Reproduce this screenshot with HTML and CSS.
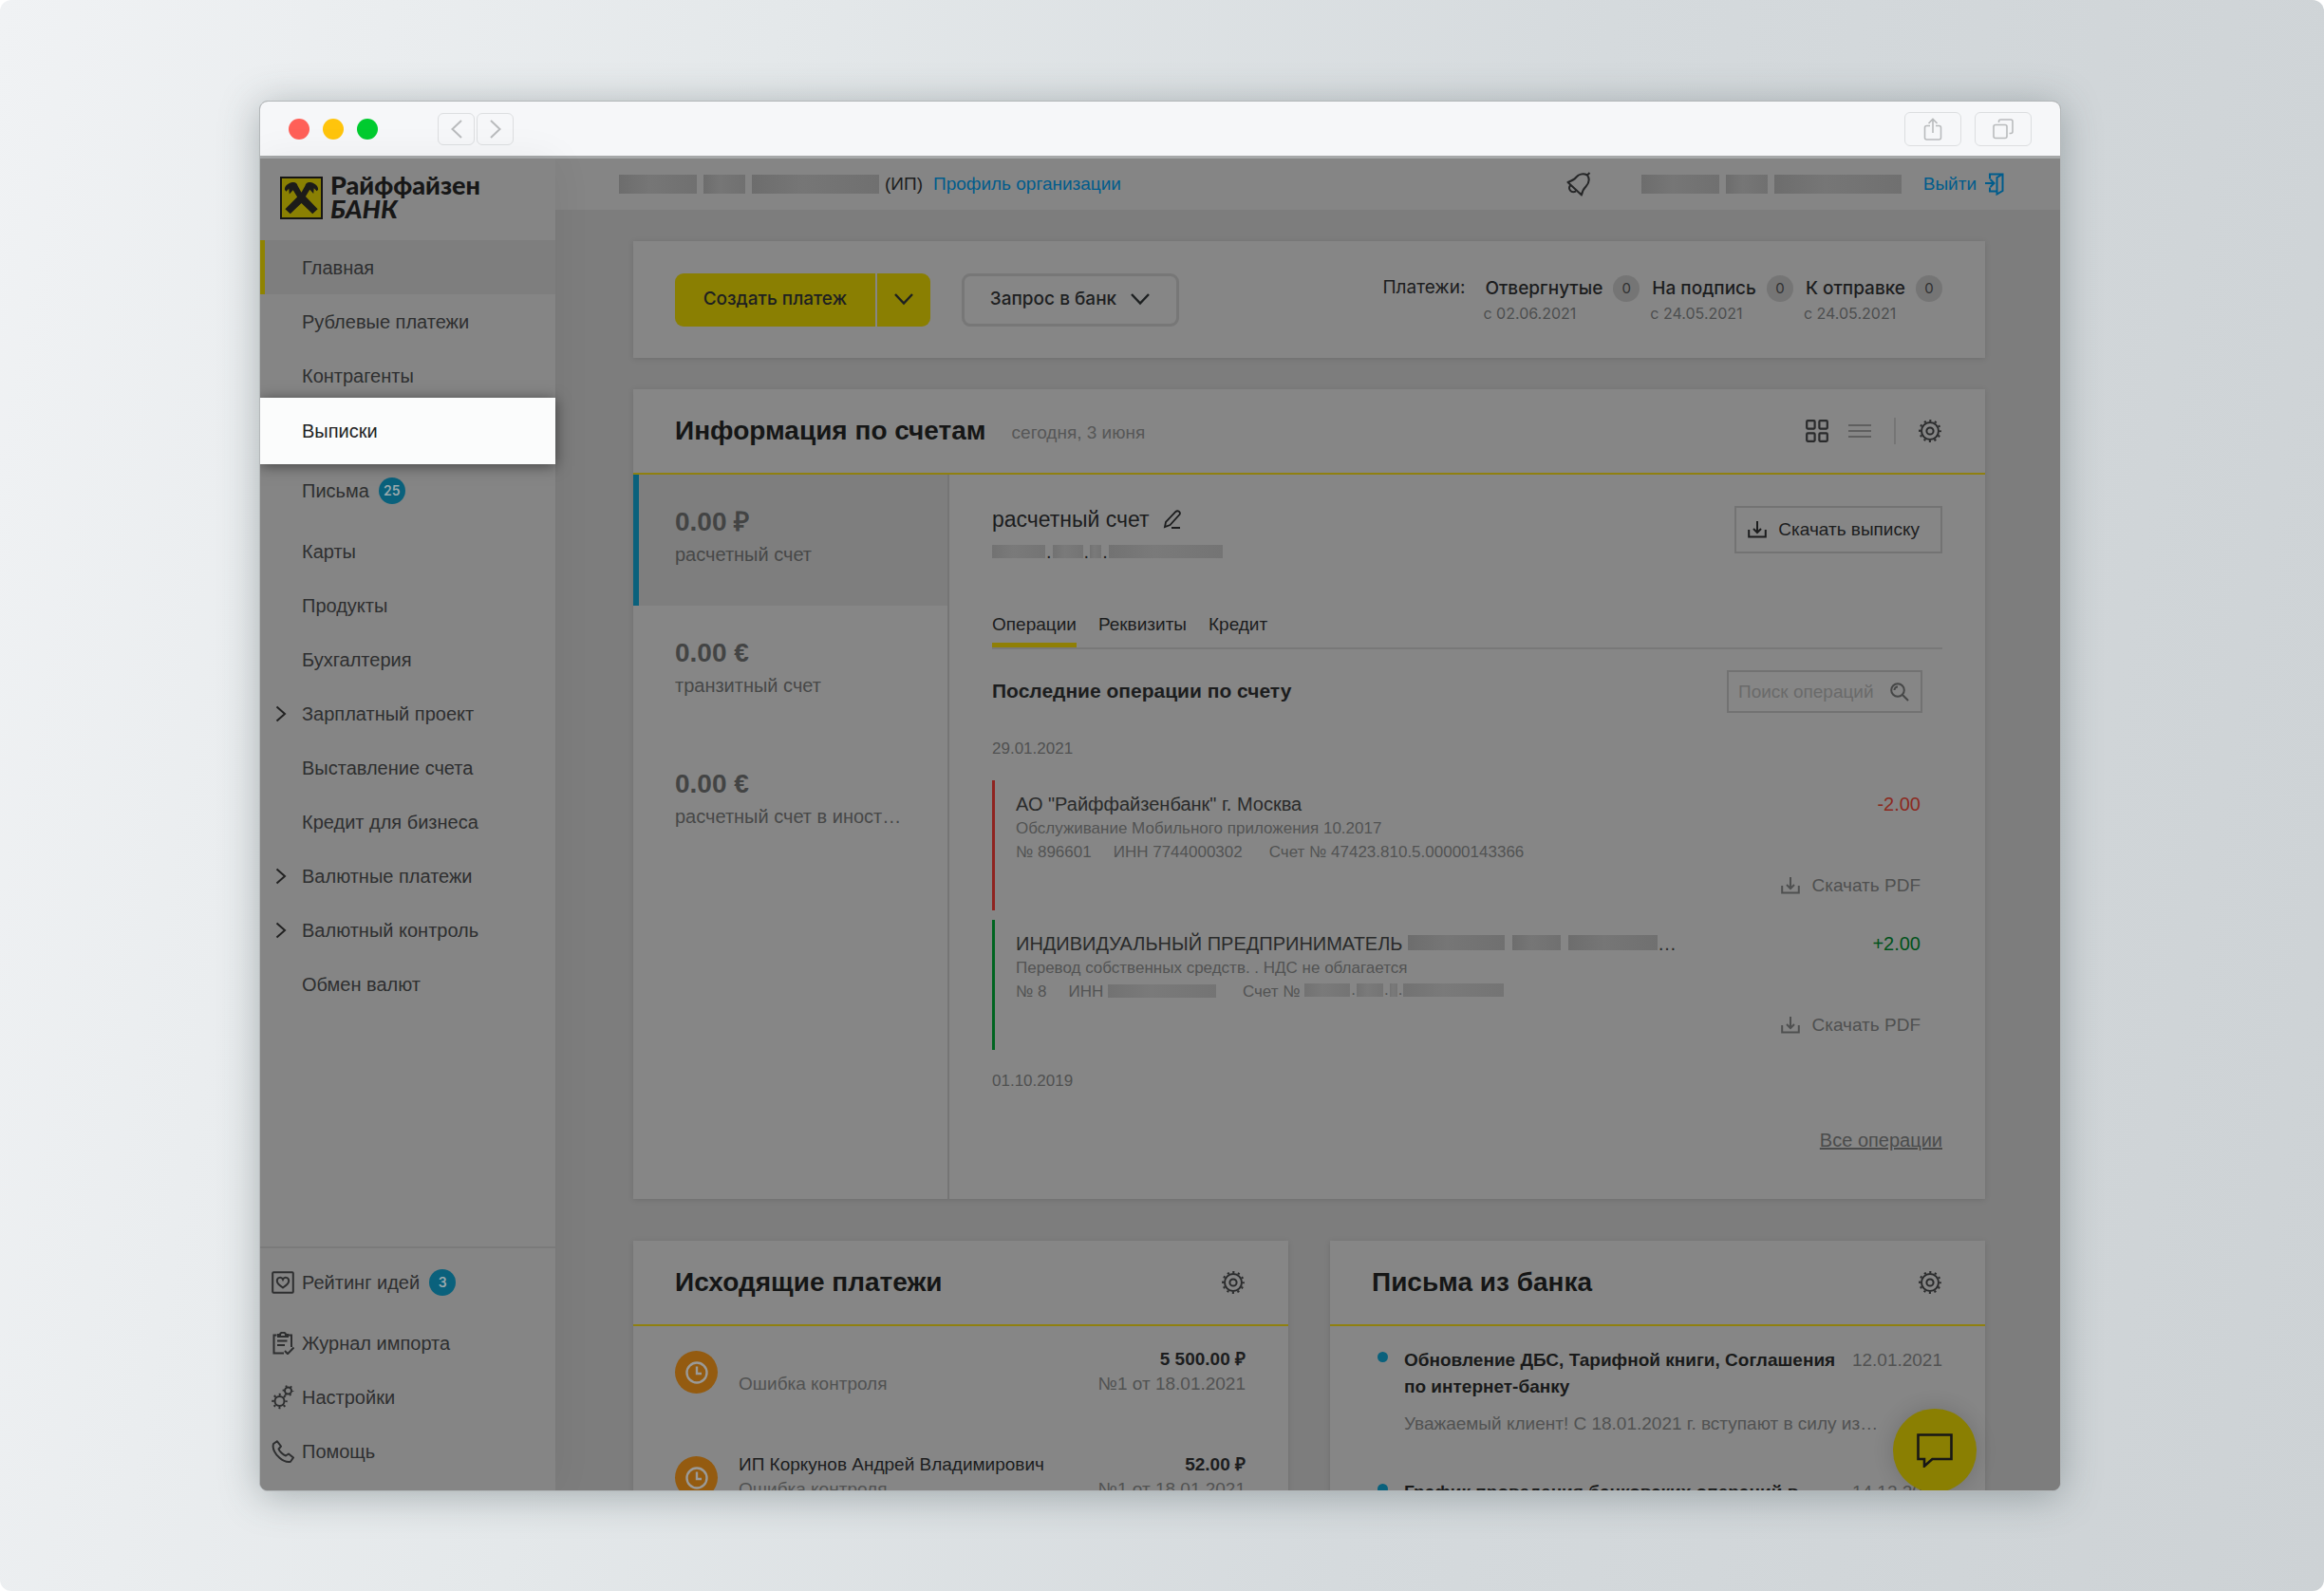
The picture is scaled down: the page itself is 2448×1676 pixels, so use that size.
FILE: index.html
```html
<!DOCTYPE html>
<html lang="ru">
<head>
<meta charset="utf-8">
<meta name="viewport" content="width=device-width, initial-scale=1">
<title>Райффайзен Банк</title>
<link rel="stylesheet" href="styles.css">
</head>
<body>
<svg class="sprite" aria-hidden="true">
  <symbol id="gear" viewBox="0 0 24 24"><g fill="none" stroke="currentColor"><circle cx="12" cy="12" r="9" stroke-width="2"/><circle cx="12" cy="12" r="3.6" stroke-width="2"/><circle cx="12" cy="12" r="10.9" stroke-width="2" stroke-dasharray="2.2 3.507" stroke-dashoffset="1.1"/></g></symbol>
  <symbol id="down" viewBox="0 0 22 14"><path d="M2 2l9 9.500L20 2" fill="none" stroke="currentColor" stroke-width="2.400"/></symbol>
  <symbol id="right" viewBox="0 0 12 18"><path d="M1.500 1.500L10 9l-8.500 7.500" fill="none" stroke="currentColor" stroke-width="2"/></symbol>
  <symbol id="download" viewBox="0 0 20 20"><path d="M1.200 10v7.600h17.600V10M10 1v12M6 9l4 4 4-4" fill="none" stroke="currentColor" stroke-width="2"/></symbol>
  <symbol id="clock" viewBox="0 0 24 24"><g fill="none" stroke="currentColor" stroke-width="2.400"><circle cx="12" cy="12" r="10.500"/><path d="M12 5.500V13h5"/></g></symbol>
</svg>

<div class="stage">
<div class="window">
  <header class="titlebar">
    <div class="lights"><i class="light red"></i><i class="light amber"></i><i class="light green"></i></div>
    <div class="history">
      <button class="tool nav" type="button" aria-label="Назад"><svg width="12" height="20" viewBox="0 0 12 20"><path d="M11 1L1.500 10l9.500 9" fill="none" stroke="currentColor" stroke-width="2"/></svg></button>
      <button class="tool nav" type="button" aria-label="Вперёд"><svg width="12" height="20" viewBox="0 0 12 20"><path d="M1 1l9.500 9L1 19" fill="none" stroke="currentColor" stroke-width="2"/></svg></button>
    </div>
    <div class="window-tools">
      <button class="tool" type="button" aria-label="Поделиться"><svg width="20" height="24" viewBox="0 0 20 24" fill="none" stroke="currentColor" stroke-width="1.600"><path d="M7 8.500H3.500a2 2 0 0 0-2 2V21a2 2 0 0 0 2 2h13a2 2 0 0 0 2-2V10.500a2 2 0 0 0-2-2H13M10 16V1.500M5.500 6L10 1.500 14.500 6"/></svg></button>
      <button class="tool" type="button" aria-label="Вкладки"><svg width="22" height="22" viewBox="0 0 22 22" fill="none" stroke="currentColor" stroke-width="1.600"><rect x="1" y="6.500" width="14" height="14" rx="2"/><path d="M6.500 4V3a2 2 0 0 1 2-2H19a2 2 0 0 1 2 2v10.500a2 2 0 0 1-2 2h-1.500"/></svg></button>
    </div>
  </header>

  <div class="app">
    <aside class="sidebar">
      <div class="logo">
        <svg width="45" height="45" viewBox="0 0 46 46"><rect width="46" height="46" fill="#141313"/><rect x="2" y="2" width="42" height="42" fill="#8a8003"/><g fill="#1c1b19"><path d="M5 14c0-4 3-6 7-7.500 4-1 6 0 7 3.500l4 7 4-7c1-3.500 3-4.500 7-3.500 4 1.500 7 3.500 7 7.500l-1.500 1.500-3-3-.500 6-4-4.500-4.500 7.500L40.500 35l-5.500 5L23 28.500 11 40l-5.500-5 13-13L14 14.500 10 19l-.500-6-3 3z"/></g></svg>
        <div class="brand"><span>Райффайзен</span><em>БАНК</em></div>
      </div>
      <nav class="menu">
        <a class="item current" href="#">Главная</a>
        <a class="item" href="#">Рублевые платежи</a>
        <a class="item" href="#">Контрагенты</a>
        <a class="item spotlight" href="#">Выписки</a>
        <a class="item tall" href="#">Письма <b class="badge">25</b></a>
        <a class="item" href="#">Карты</a>
        <a class="item" href="#">Продукты</a>
        <a class="item" href="#">Бухгалтерия</a>
        <a class="item nested" href="#"><svg class="chev"><use href="#right"/></svg>Зарплатный проект</a>
        <a class="item" href="#">Выставление счета</a>
        <a class="item" href="#">Кредит для бизнеса</a>
        <a class="item nested" href="#"><svg class="chev"><use href="#right"/></svg>Валютные платежи</a>
        <a class="item nested" href="#"><svg class="chev"><use href="#right"/></svg>Валютный контроль</a>
        <a class="item" href="#">Обмен валют</a>
      </nav>
      <nav class="menu service">
        <a class="item iconed tall" href="#"><svg width="24" height="24" viewBox="0 0 24 24" fill="none" stroke="currentColor" stroke-width="2"><rect x="1.200" y="1.200" width="21.600" height="21.600" rx="1"/><path d="M12 17.500C8 15 5.800 13 5.800 10.300c0-3.800 4.700-4.800 6.200-1.500 1.500-3.300 6.200-2.300 6.200 1.500 0 2.700-2.200 4.700-6.200 7.200z"/></svg>Рейтинг идей <b class="badge">3</b></a>
        <a class="item iconed" href="#"><svg width="24" height="24" viewBox="0 0 24 24" fill="none" stroke="currentColor" stroke-width="2"><path d="M5.500 3.500h-3V22.500h10.500M17.500 3.500h3.500V16M7 5V3h2c0-3 6-3 6 0h2v2zM6 9.500h10.500M6 14h8M14 20l3 3.200 6.500-6.700"/></svg>Журнал импорта</a>
        <a class="item iconed" href="#"><svg width="24" height="26" viewBox="0 0 24 26" fill="none" stroke="currentColor"><circle cx="8.500" cy="17" r="5" stroke-width="2"/><circle cx="8.500" cy="17" r="7" stroke-width="2.400" stroke-dasharray="2 3.498" stroke-dashoffset="1"/><circle cx="17.500" cy="6" r="3.500" stroke-width="2"/><circle cx="17.500" cy="6" r="5" stroke-width="1.800" stroke-dasharray="1.800 3.436" stroke-dashoffset=".9"/></svg>Настройки</a>
        <a class="item iconed" href="#"><svg width="24" height="24" viewBox="0 0 24 24" fill="none" stroke="currentColor" stroke-width="2" stroke-linejoin="round"><path d="M5.800 1.200L2 4c-1.500 5 2 11 6.500 14.800 3.500 3 8 4.700 11.500 4L23 18.500l-5-4-3 2c-3-1-6.500-4.500-7.500-7l2.500-3z"/></svg>Помощь</a>
      </nav>
    </aside>

    <main class="main">
      <header class="topbar">
        <span class="blur-row"><i class="px p82"></i><i class="px p44"></i><i class="px p134"></i></span>
        <span class="entity">(ИП)</span>
        <a class="link" href="#">Профиль организации</a>
        <button class="bell" type="button" aria-label="Уведомления"><svg width="26" height="26" viewBox="0 0 26 26" fill="none" stroke="currentColor" stroke-width="2" stroke-linejoin="round"><path d="M22 3.500c-5-2.500-9.500-.500-12 2.500C8 8.500 5.500 9.500 1.500 11L16 24.500c.500-4 2-6.500 4.500-9C24 11.500 24.500 7 22 3.500zM22 3.500L24.500 1M4 14.500c-2.500 3 .500 8.500 6 6"/></svg></button>
        <span class="blur-row"><i class="px p82"></i><i class="px p44"></i><i class="px p134"></i></span>
        <a class="link exit" href="#">Выйти <svg width="20" height="24" viewBox="0 0 20 24" fill="none" stroke="currentColor" stroke-width="2"><path d="M5 6.500V1.500h13.500V19L12.500 22.500V5l6-3.500M5 15.500v4h7.500M0 11h9M5.500 7l4 4-4 4"/></svg></a>
      </header>

      <div class="content">
        <section class="panel actions">
          <div class="split">
            <button class="primary" type="button">Создать платеж</button>
            <button class="primary more" type="button" aria-label="Ещё"><svg width="22" height="14"><use href="#down"/></svg></button>
          </div>
          <button class="outline" type="button">Запрос в банк <svg width="22" height="14"><use href="#down"/></svg></button>
          <div class="stats">
            <span class="stats-title">Платежи:</span>
            <div class="stat"><div><b>Отвергнутые</b><i class="count">0</i></div><small>с 02.06.2021</small></div>
            <div class="stat"><div><b>На подпись</b><i class="count">0</i></div><small>с 24.05.2021</small></div>
            <div class="stat"><div><b>К отправке</b><i class="count">0</i></div><small>с 24.05.2021</small></div>
          </div>
        </section>

        <section class="panel accounts">
          <header class="panel-head">
            <h2>Информация по счетам</h2><span class="today">сегодня, 3 июня</span>
            <div class="views">
              <button class="icon-btn" type="button" aria-label="Плитка"><svg width="24" height="24" viewBox="0 0 24 24" fill="none" stroke="currentColor" stroke-width="2.200"><rect x="1.200" y="1.200" width="8.400" height="8.400" rx="1"/><rect x="14.400" y="1.200" width="8.400" height="8.400" rx="1"/><rect x="1.200" y="14.400" width="8.400" height="8.400" rx="1"/><rect x="14.400" y="14.400" width="8.400" height="8.400" rx="1"/></svg></button>
              <button class="icon-btn faint" type="button" aria-label="Список"><svg width="24" height="16" viewBox="0 0 24 16" stroke="currentColor" stroke-width="2"><path d="M0 2h24M0 8h24M0 14h24"/></svg></button>
              <span class="rule"></span>
              <button class="icon-btn" type="button" aria-label="Настроить"><svg width="24" height="24"><use href="#gear"/></svg></button>
            </div>
          </header>
          <div class="accounts-body">
            <div class="account-list">
              <a class="account selected" href="#"><strong>0.00 ₽</strong><span>расчетный счет</span></a>
              <a class="account" href="#"><strong>0.00 €</strong><span>транзитный счет</span></a>
              <a class="account" href="#"><strong>0.00 €</strong><span>расчетный счет в иност…</span></a>
            </div>
            <div class="detail">
              <div class="detail-head">
                <div>
                  <h3>расчетный счет <svg width="20" height="20" viewBox="0 0 20 20" fill="none" stroke="currentColor" stroke-width="1.800"><path d="M2 18l1-5L13.500 2c2-2 5.500.500 4 3L7.500 16zM9 19h9"/></svg></h3>
                  <div class="masked dim"><i class="px p56"></i>.<i class="px p32"></i>.<i class="px p12"></i>.<i class="px p120"></i></div>
                </div>
                <button class="download" type="button"><svg width="20" height="20"><use href="#download"/></svg>Скачать выписку</button>
              </div>
              <nav class="tabs"><a class="on" href="#">Операции</a><a href="#">Реквизиты</a><a href="#">Кредит</a></nav>
              <div class="ops-head">
                <h4>Последние операции по счету</h4>
                <label class="search"><input type="text" placeholder="Поиск операций" aria-label="Поиск операций"><svg width="20" height="20" viewBox="0 0 20 20" fill="none" stroke="currentColor" stroke-width="2"><circle cx="8" cy="8" r="6.800"/><path d="M13 13l6 6M4.500 8A3.500 3.500 0 0 1 8 4.500" /></svg></label>
              </div>
              <p class="date">29.01.2021</p>
              <article class="op out">
                <div class="op-info"><p class="op-name">АО "Райффайзенбанк" г. Москва</p><p>Обслуживание Мобильного приложения 10.2017</p><p class="op-meta"><span>№ 896601</span><span>ИНН 7744000302</span><span class="acc">Счет № 47423.810.5.00000143366</span></p></div>
                <div class="op-side"><span class="sum">-2.00</span><a href="#"><svg width="20" height="20"><use href="#download"/></svg>Скачать PDF</a></div>
              </article>
              <article class="op in">
                <div class="op-info"><p class="op-name">ИНДИВИДУАЛЬНЫЙ ПРЕДПРИНИМАТЕЛЬ <span class="masked words"><i class="px p102"></i><i class="px p51"></i><i class="px p94"></i></span>…</p><p>Перевод собственных средств. . НДС не облагается</p><p class="op-meta"><span>№ 8</span><span>ИНН <i class="px dimmer p114"></i></span><span class="acc">Счет № <span class="masked dim small"><i class="px p48"></i>.<i class="px p28"></i>.<i class="px p8"></i>.<i class="px p106"></i></span></span></p></div>
                <div class="op-side"><span class="sum">+2.00</span><a href="#"><svg width="20" height="20"><use href="#download"/></svg>Скачать PDF</a></div>
              </article>
              <p class="date">01.10.2019</p>
              <p class="all"><a href="#">Все операции</a></p>
            </div>
          </div>
        </section>

        <div class="pair">
          <section class="panel">
            <header class="panel-head"><h2>Исходящие платежи</h2><button class="icon-btn" type="button" aria-label="Настроить"><svg width="24" height="24"><use href="#gear"/></svg></button></header>
            <ul class="list">
              <li class="payment"><span class="status"><svg width="24" height="24"><use href="#clock"/></svg></span><div class="who"><p></p><p class="muted">Ошибка контроля</p></div><div class="amount"><b>5 500.00 ₽</b><p class="muted">№1 от 18.01.2021</p></div></li>
              <li class="payment"><span class="status"><svg width="24" height="24"><use href="#clock"/></svg></span><div class="who"><p>ИП Коркунов Андрей Владимирович</p><p class="muted">Ошибка контроля</p></div><div class="amount"><b>52.00 ₽</b><p class="muted">№1 от 18.01.2021</p></div></li>
            </ul>
          </section>
          <section class="panel">
            <header class="panel-head"><h2>Письма из банка</h2><button class="icon-btn" type="button" aria-label="Настроить"><svg width="24" height="24"><use href="#gear"/></svg></button></header>
            <ul class="list">
              <li class="letter"><i class="dot"></i><b>Обновление ДБС, Тарифной книги, Соглашения<br>по интернет-банку</b><time class="muted">12.01.2021</time><p class="muted">Уважаемый клиент! С 18.01.2021 г. вступают в силу из…</p></li>
              <li class="letter"><i class="dot"></i><b>График проведения банковских операций в</b><time class="muted">14.12.2020</time></li>
            </ul>
          </section>
        </div>
      </div>
    </main>
    <button class="chat" type="button" aria-label="Чат"><svg width="38" height="36" viewBox="0 0 38 36" fill="none" stroke="currentColor" stroke-width="2.600"><path d="M1.500 1.500h35v25.500H16.500L8 34.500V27H1.500z"/></svg></button>
  </div>
</div>
</div>
</body>
</html>
```
FILE: styles.css
```css
* { box-sizing: border-box; }
body {
  margin: 0;
  background: #fff;
  font: 20px/26px "Liberation Sans", Arial, sans-serif;
  color: #1c1d1e;
}
p, h2, h3, h4, ul { margin: 0; padding: 0; }
ul { list-style: none; }
a { color: inherit; text-decoration: none; }
button { margin: 0; padding: 0; border: 0; background: none; color: inherit; font: inherit; }
svg { display: block; flex: none; }
i { font-style: normal; }
.sprite { position: absolute; width: 0; height: 0; }

.stage {
  display: flex;
  height: 100vh;
  padding: 106px 277px 105px 273px;
  border-radius: 12px;
  background: linear-gradient(100deg, #f0f2f4 0%, #e4e8ea 30%, #d5dadd 62%, #cdd2d5 100%);
}
.window {
  display: flex;
  flex: 1;
  flex-direction: column;
  min-width: 0;
  overflow: hidden;
  border: 1px solid #b3b7b9;
  border-radius: 9px;
  background: #858585;
  box-shadow: 0 5px 40px rgba(60, 75, 80, .38);
}

.titlebar {
  display: flex;
  flex: none;
  align-items: center;
  height: 60px;
  padding: 0 30px;
  border-bottom: 3px solid #a6a8a9;
  background: #f6f7f9;
}
.lights { display: flex; gap: 14px; }
.light { width: 22px; height: 22px; border-radius: 50%; }
.red { background: #ff6058; }
.amber { background: #ffc40c; }
.green { background: #00cb2f; }
.history { display: flex; gap: 2px; margin-left: 63px; }
.window-tools { display: flex; gap: 14px; margin-left: auto; }
.tool {
  display: grid;
  place-items: center;
  width: 60px;
  height: 36px;
  border: 1px solid #dcdee0;
  border-radius: 6px;
  color: #b9bbbd;
}
.nav { width: 39px; height: 34px; }

.app { position: relative; display: flex; flex: 1; min-height: 0; }
.sidebar {
  position: relative;
  z-index: 1;
  display: flex;
  flex: none;
  flex-direction: column;
  width: 311px;
  background: #858585;
  box-shadow: 0 0 40px rgba(0, 0, 0, .06);
}
.logo { display: flex; gap: 8px; height: 86px; padding: 19px 20px 0 21px; }
.brand { margin-top: -4px; color: #171717; font: 900 27px/25px Lato, "Open Sans", sans-serif; }
.brand span, .brand em { display: block; }
.menu { color: #2e2f30; }
.item {
  display: flex;
  align-items: center;
  gap: 10px;
  height: 57px;
  padding-left: 44px;
}
.current { padding-left: 39px; border-left: 5px solid #8f8300; background: #7e7e7e; }
.spotlight {
  position: relative;
  height: 70px;
  margin: -5px 0 -8px;
  background: #fbfcfc;
  color: #222324;
  box-shadow: 0 2px 14px rgba(0, 0, 0, .5);
}
.tall { height: 71px; }
.nested, .iconed { gap: 0; padding-left: 12px; }
.iconed svg { margin-right: 8px; }
.nested { padding-left: 16px; }
.chev { width: 12px; height: 18px; margin-right: 16px; color: #222; }
.badge {
  width: 28px;
  height: 28px;
  border-radius: 50%;
  background: #0a617c;
  color: #9aa9ad;
  font: 600 14px/28px Inter, sans-serif;
  text-align: center;
}
.iconed .badge { margin-left: 10px; }
.service { margin-top: auto; padding-bottom: 13px; border-top: 2px solid #7a7a7a; }

.main { flex: 1; min-width: 0; overflow: hidden; background: #7d7d7d; }
.topbar {
  display: flex;
  align-items: center;
  height: 54px;
  padding: 0 59px 0 67px;
  background: #858585;
  font-size: 19px;
}
.blur-row { display: flex; gap: 7px; }
.px {
  display: inline-block;
  flex: none;
  height: 20px;
  background: linear-gradient(90deg, #6d6d6d, #767676 40%, #707070);
}
.p8 { width: 8px; }
.p12 { width: 12px; }
.p28 { width: 28px; }
.p32 { width: 32px; }
.p44 { width: 44px; }
.p48 { width: 48px; }
.p51 { width: 51px; }
.p56 { width: 56px; }
.p82 { width: 82px; }
.p94 { width: 94px; }
.p102 { width: 102px; }
.p106 { width: 106px; }
.p114 { width: 114px; }
.p120 { width: 120px; }
.p134 { width: 134px; }
.entity { margin: 0 11px 0 6px; }
.link { color: #005c8c; }
.bell { margin: 0 53px 0 auto; color: #262728; }
.exit { display: flex; align-items: center; gap: 9px; margin-left: 23px; }

.content { padding: 33px 79px 0 82px; }
.panel { background: #868686; box-shadow: 0 1px 6px rgba(0, 0, 0, .12); }
.actions { display: flex; align-items: center; height: 123px; padding: 0 45px 0 44px; font-family: Inter, sans-serif; }
.split { display: flex; gap: 2px; }
.primary {
  width: 211px;
  height: 56px;
  padding-bottom: 2px;
  border-radius: 9px 0 0 9px;
  background: #8a7f02;
  color: #1d2021;
  font: 500 19px/24px Inter, sans-serif;
}
.more { display: grid; place-items: center; width: 56px; border-radius: 0 9px 9px 0; }
.outline {
  display: flex;
  align-items: center;
  justify-content: center;
  gap: 14px;
  width: 229px;
  height: 56px;
  margin-left: 33px;
  padding-bottom: 2px;
  border: 3px solid #777;
  border-radius: 9px;
  color: #1d2021;
  font: 500 19px/24px Inter, sans-serif;
}
.stats { display: flex; gap: 11px; margin-left: auto; font-size: 19px; }
.stats-title { margin-right: 8px; }
.stat div { display: flex; justify-content: space-between; gap: 11px; height: 28px; padding-left: 2px; }
.stat b { font-weight: 500; line-height: 28px; }
.stat small { display: block; color: #4c4e4f; font-size: 16px; line-height: 24px; }
.count { width: 28px; height: 28px; border-radius: 50%; background: #757575; color: #303132; font: 15px/28px Inter, sans-serif; text-align: center; }

.accounts { margin-top: 33px; }
.panel-head {
  display: flex;
  align-items: center;
  justify-content: space-between;
  height: 90px;
  padding: 0 46px 0 44px;
  border-bottom: 2px solid #8f8010;
}
h2 { color: #151616; font-size: 28px; line-height: 34px; }
.today { margin: 4px auto 0 27px; color: #565757; font-size: 19px; }
.views { display: flex; align-items: center; gap: 21px; }
.icon-btn { color: #2a2b2c; }
.faint { color: #5f5f5f; }
.rule { width: 2px; height: 28px; margin: 0 3px; background: #757575; }
.accounts-body { display: grid; grid-template-columns: 333px 1fr; }
.account-list { border-right: 2px solid #757575; color: #474848; }
.account { display: block; height: 138px; padding: 33px 0 0 44px; }
.account strong { display: block; margin-bottom: 4px; font-size: 28px; line-height: 34px; color: #434444; }
.selected { padding-left: 38px; border-left: 6px solid #0a617c; background: #7e7e7e; }
.detail { padding: 33px 45px 49px; }
.detail-head { display: flex; justify-content: space-between; height: 113px; }
h3 { display: flex; align-items: center; gap: 14px; font-size: 23px; font-weight: 400; line-height: 28px; }
.masked { display: inline-flex; align-items: flex-end; gap: 1px; line-height: 14px; }
h3 + .masked { display: flex; margin-top: 13px; }
.masked .px { height: 14px; }
.words { gap: 8px; }
.words .px { height: 16px; }
.dim .px, .dimmer { background: linear-gradient(90deg, #727272, #7a7a7a 40%, #747474); }
.dimmer { height: 14px; vertical-align: -1px; }
.small { font-size: 17px; }
.download {
  display: flex;
  align-items: center;
  gap: 12px;
  height: 50px;
  padding: 0 22px 0 12px;
  border: 2px solid #737373;
  font-size: 19px;
}
.tabs { display: flex; gap: 23px; border-bottom: 2px solid #787878; font-size: 19px; }
.tabs a { padding-bottom: 7px; border-bottom: 5px solid transparent; line-height: 24px; }
.tabs .on { border-color: #8f7f06; }
.ops-head { display: flex; align-items: center; justify-content: space-between; margin-top: 22px; padding-right: 21px; }
h4 { padding-bottom: 2px; font-size: 21px; }
.search {
  display: flex;
  align-items: center;
  justify-content: space-between;
  width: 206px;
  height: 45px;
  padding: 0 12px 0 10px;
  border: 2px solid #727272;
  color: #464747;
  font-size: 19px;
}
.search input { width: 154px; padding: 0; border: 0; outline: 0; background: none; font: inherit; }
.search input::placeholder { color: #6a6a6a; opacity: 1; }
.date { margin: 25px 0 20px; color: #505151; font-size: 17px; }
.op {
  display: flex;
  justify-content: space-between;
  height: 137px;
  margin-bottom: 10px;
  padding: 12px 23px 0 22px;
  border-left: 3px solid;
}
.op + .date { margin-top: 20px; }
.out { border-color: #8f2420; }
.in { border-color: #006420; }
.op-info p { color: #525353; font-size: 17px; line-height: 25px; }
.op-info .op-name { color: #2a2b2b; font-size: 20px; line-height: 26px; }
.op-info .op-meta { display: flex; gap: 23px; }
.op-meta .acc { margin-left: 5px; }
.op-side { display: flex; flex-direction: column; align-items: flex-end; gap: 60px; color: #4f5050; }
.op-side a { display: flex; align-items: center; gap: 12px; font-size: 19px; }
.out .sum { color: #8c2a20; }
.in .sum { color: #00521a; }
.all { margin-top: 36px; color: #4b4c4c; text-align: right; }
.all a { text-decoration: underline; }

.pair { display: grid; grid-template-columns: 1fr 1fr; gap: 44px; margin-top: 44px; }
.list { padding: 22px 45px 0 44px; font-size: 19px; }
.muted { color: #515252; }
.payment { display: flex; height: 111px; }
.status { display: grid; place-items: center; width: 45px; height: 45px; margin: 4px 22px 0 0; border-radius: 50%; background: #945b10; color: #9a9a98; }
.who { flex: 1; }
.who p { min-height: 26px; }
.amount { text-align: right; }
.letter { display: grid; grid-template-columns: 34px 1fr auto; align-content: start; height: 139px; line-height: 28px; }
.letter .dot { width: 11px; height: 11px; margin: 5px 0 0 6px; border-radius: 50%; background: #0a617c; }
.letter b { color: #191a1a; white-space: nowrap; }
.letter p { grid-column: 2 / 4; margin-top: 12px; line-height: 26px; white-space: nowrap; }

.chat {
  position: absolute;
  right: 88px;
  bottom: -2px;
  z-index: 2;
  display: grid;
  place-items: center;
  width: 88px;
  height: 88px;
  border-radius: 50%;
  background: #8a7f02;
  color: #171717;
  box-shadow: 0 0 22px rgba(0, 0, 0, .16);
}
```
